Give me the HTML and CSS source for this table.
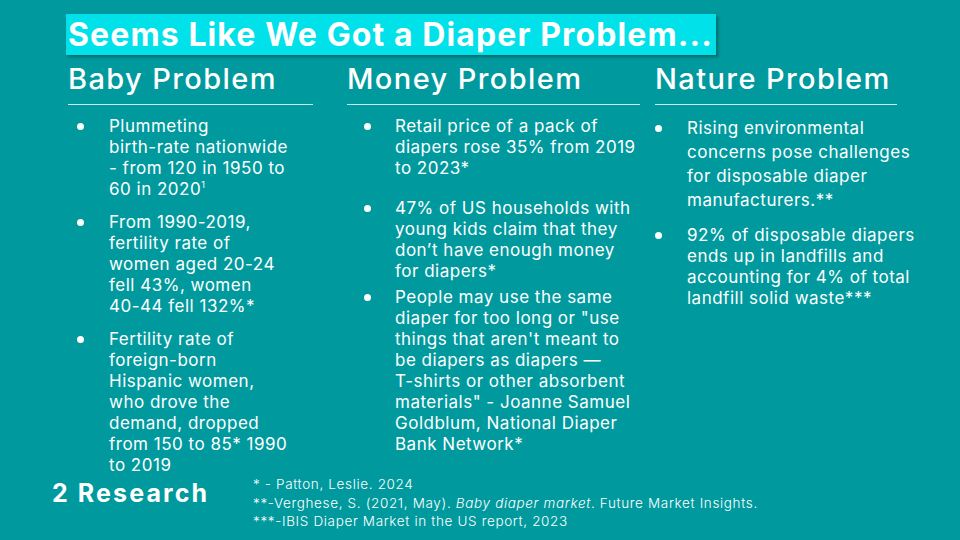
FILE: index.html
```html
<!DOCTYPE html>
<html lang="en">
<head>
<meta charset="utf-8">
<title>Seems Like We Got a Diaper Problem...</title>
<link rel="stylesheet" href="styles.css">
</head>
<body>
<main class="slide">
  <header class="title-wrap">
    <h1 class="title">Seems Like We Got a Diaper Problem...</h1>
  </header>
  <section class="columns">
    <div class="col col-baby">
      <h2 class="col-head">Baby Problem</h2>
      <ul class="list">
        <li>Plummeting<br><span class="nw">birth-rate</span> nationwide<br>- from 120 in 1950 to<br>60 in 2020<sup class="sup">1</sup></li>
        <li>From <span class="nw">1990-2019,</span><br>fertility rate of<br>women aged <span class="nw">20-24</span><br>fell 43%, women<br><span class="nw">40-44</span> fell 132%*</li>
        <li>Fertility rate of<br><span class="nw">foreign-born</span><br>Hispanic women,<br>who drove the<br>demand, dropped<br>from 150 to 85* 1990<br>to 2019</li>
      </ul>
    </div>
    <div class="col col-money">
      <h2 class="col-head">Money Problem</h2>
      <ul class="list">
        <li>Retail price of a pack of diapers rose 35% from 2019 to 2023*</li>
        <li class="gap-big">47% of US households with young kids claim that they don’t have enough money for diapers*</li>
        <li class="gap-small">People may use the same diaper for too long or "use things that aren't meant to be diapers as diapers — <span class="nw">T-shirts</span> or other absorbent materials" - Joanne Samuel Goldblum, National Diaper Bank Network*</li>
      </ul>
    </div>
    <div class="col col-nature">
      <h2 class="col-head">Nature Problem</h2>
      <ul class="list">
        <li class="tall">Rising environmental concerns pose challenges for disposable diaper manufacturers.**</li>
        <li>92% of disposable diapers ends up in landfills and accounting for 4% of total landfill solid waste***</li>
      </ul>
    </div>
  </section>
  <footer class="footer">
    <div class="brand">2 Research</div>
    <div class="notes">
      <p>* - Patton, Leslie. 2024</p>
      <p>**-Verghese, S. (2021, May). <em>Baby diaper market</em>. Future Market Insights.</p>
      <p>***-IBIS Diaper Market in the US report, 2023</p>
    </div>
  </footer>
</main>
</body>
</html>
```

FILE: styles.css
```css
* { box-sizing: border-box; }
html, body { margin: 0; padding: 0; }
body {
  width: 960px;
  height: 540px;
  background: #009a9e;
  color: #ffffff;
  font-family: "Inter", "Noto Sans", sans-serif;
  overflow: hidden;
}
.slide {
  width: 960px;
  height: 540px;
  display: flex;
  flex-direction: column;
  padding-top: 14px;
}
.title-wrap {
  padding-left: 66px;
  flex-shrink: 0;
}
.title {
  display: block;
  margin: 0;
  height: 41px;
  width: 650px;
  padding: 0 0 0 2px;
  background: #00e1ea;
  box-shadow: 2px 2px 3px rgba(0, 40, 40, 0.45);
  font-size: 32px;
  font-weight: 700;
  line-height: 42px;
  letter-spacing: 1.1px;
  white-space: nowrap;
  overflow: hidden;
}
.columns {
  display: flex;
  padding-left: 68px;
  margin-top: 5px;
  flex: 1 1 0;
  min-height: 0;
}
.col-head {
  margin: 0;
  font-size: 29px;
  font-weight: 500;
  line-height: 37px;
  padding-bottom: 7px;
  letter-spacing: 1.4px;
  border-bottom: 1px solid rgba(255, 255, 255, 0.8);
  white-space: nowrap;
}
.col-baby { width: 245px; }
.col-money { width: 293px; margin-left: 34px; }
.col-nature { width: 242px; margin-left: 15px; }
.list {
  list-style: none;
  margin: 11px 0 0;
  padding: 0;
  font-size: 17px;
  line-height: 21px;
  font-weight: 400;
  letter-spacing: 0.5px;
}
.nw { white-space: nowrap; }
.list li {
  position: relative;
  margin-bottom: 12px;
}
.list li:last-child { margin-bottom: 0; }
.list li::before {
  content: "";
  position: absolute;
  top: 7px;
  width: 7px;
  height: 7px;
  border-radius: 50%;
  background: #ffffff;
}
.col-baby .list { padding-left: 41px; margin-right: 0; white-space: nowrap; }
.col-baby .list li::before { left: -32px; }
.col-money .list { padding-left: 48px; margin-right: 2px; }
.col-money .list li::before { left: -31px; }
.col-money .list li.gap-big { margin-top: 19px; }
.col-money .list li.gap-small { margin-top: -7px; }
.col-nature .list { padding-left: 32px; margin-right: -26px; }
.col-nature .list li::before { left: -32px; }
.col-nature .list li.tall { line-height: 24px; margin-bottom: 13px; }
.col-nature .list li.tall::before { top: 9px; }
.sup {
  font-size: 9px;
  line-height: 0;
  vertical-align: 7px;
}
.footer {
  display: flex;
  align-items: flex-start;
  padding-left: 52px;
  height: 65px;
  flex-shrink: 0;
}
.brand {
  width: 201px;
  font-size: 25px;
  font-weight: 700;
  line-height: 36px;
  padding-top: 0;
  letter-spacing: 2.1px;
  white-space: nowrap;
}
.notes {
  font-size: 13.5px;
  font-weight: 300;
  line-height: 18.5px;
  letter-spacing: 0.65px;
}
.notes p { margin: 0; white-space: nowrap; }
```
